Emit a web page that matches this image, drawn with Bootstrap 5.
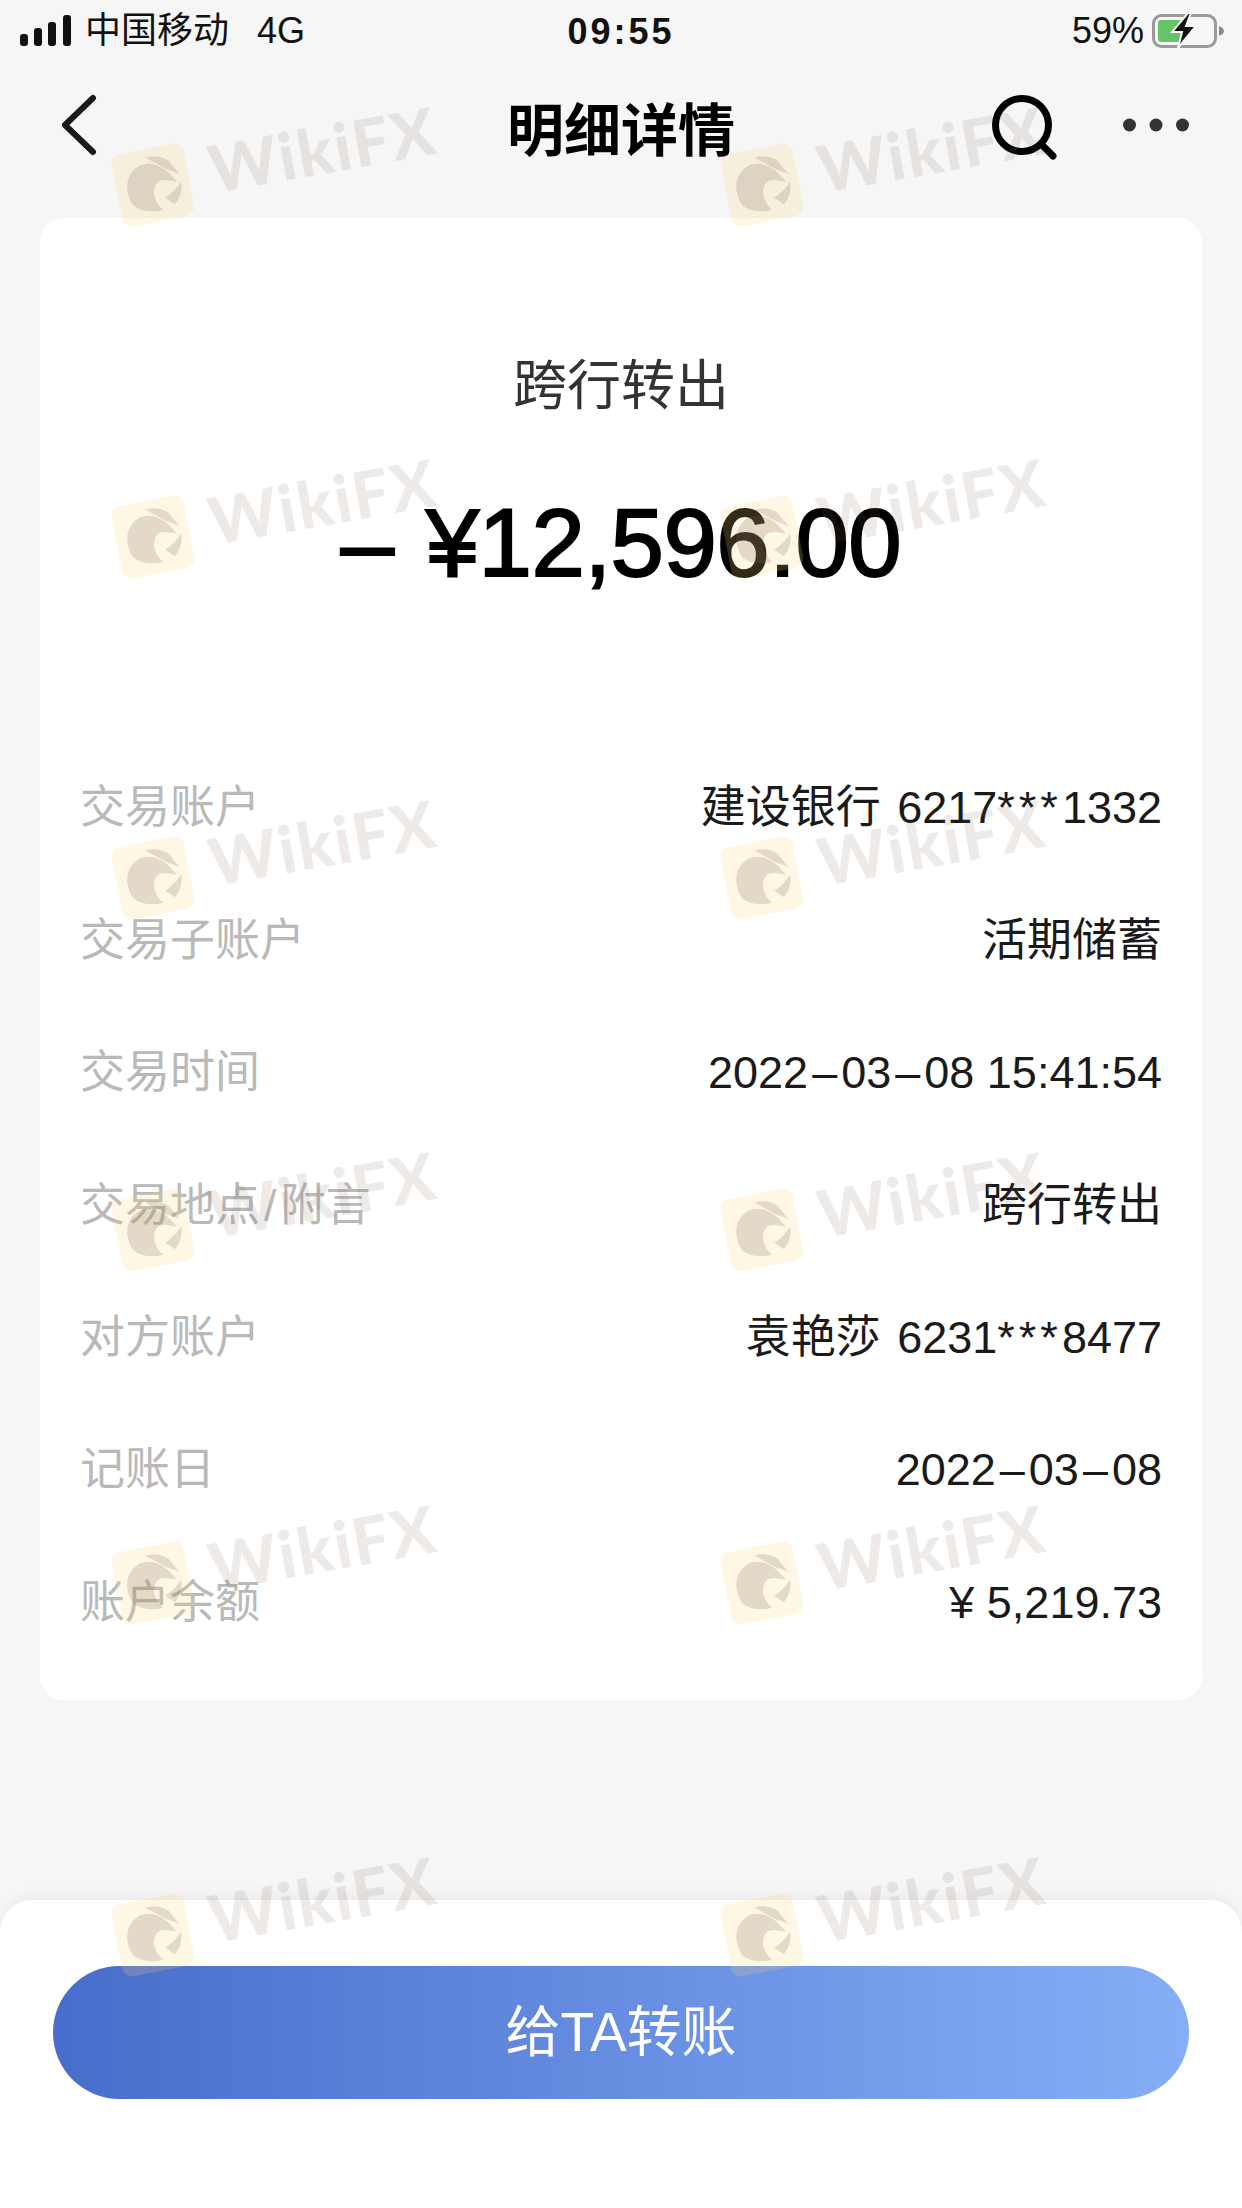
<!DOCTYPE html>
<html lang="zh-CN">
<head>
    <meta charset="UTF-8">
    <title>明细详情</title>
    <link href="https://cdn.jsdelivr.net/npm/bootstrap@5.3.0/dist/css/bootstrap.min.css" rel="stylesheet">
    <style>
        html, body {
            margin: 0;
            height: 2208px;
            overflow: hidden;
        }
        body {
            position: relative;
            width: 1242px;
            background-color: #f6f6f6;
            font-family: "Liberation Sans", "Noto Sans CJK SC", sans-serif;
            color: #111;
        }
        .phone-status {
            height: 62px;
            padding: 0 16px 0 20px;
            font-size: 36px;
            position: relative;
        }
        .phone-carrier {
            margin-left: 14px;
        }
        .phone-net {
            margin-left: 28px;
        }
        .phone-time {
            position: absolute;
            left: 0;
            right: 0;
            top: 5px;
            text-align: center;
            font-weight: 700;
            letter-spacing: 3px;
        }
        .phone-nav {
            height: 156px;
            padding: 0 53px 30px 60px;
            position: relative;
        }
        .phone-title {
            position: absolute;
            left: 0;
            right: 0;
            top: 27px;
            text-align: center;
            font-size: 57px;
            font-weight: 700;
            color: #000;
        }
        .nav-tools {
            gap: 65px;
        }
        .nav-search {
            margin-top: 6px;
        }
        .detail-sheet {
            margin: 0 40px;
            height: 1482px;
            background: #fff;
            border-radius: 24px;
            padding: 136px 40px 0;
        }
        .detail-kind {
            font-size: 54px;
            line-height: 64px;
            color: #333;
            text-align: center;
        }
        .detail-sum {
            margin-top: 69px;
            font-size: 96px;
            line-height: 112px;
            letter-spacing: -0.5px;
            -webkit-text-stroke: 2px #000;
            color: #000;
            text-align: center;
        }
        .detail-minus {
            margin-right: 32px;
        }
        .detail-rows {
            margin-top: 143px;
        }
        .detail-row {
            height: 132.4px;
            font-size: 45px;
        }
        .detail-label {
            color: #b9b9b9;
        }
        .detail-slash {
            margin: 0 4px;
        }
        .detail-value {
            color: #1a1a1a;
        }
        .detail-acct {
            word-spacing: 4px;
        }
        .detail-stars {
            letter-spacing: 4px;
        }
        .detail-dash {
            margin: 0 4px;
        }
        .action-panel {
            position: absolute;
            left: 0;
            right: 0;
            top: 1900px;
            bottom: 0;
            background: #fff;
            border-radius: 32px 32px 0 0;
            box-shadow: 0 -4px 14px rgba(0, 0, 0, 0.05);
            padding: 66px 53px 0 53px;
        }
        .action-btn {
            width: 100%;
            height: 133px;
            border: 0;
            border-radius: 67px;
            background: linear-gradient(90deg, #486dcb, #86aef6);
            color: #fff;
            font-size: 55px;
        }
        .mark-layer {
            position: absolute;
            inset: 0;
            pointer-events: none;
        }
        .mark-item {
            position: absolute;
            width: 340px;
            height: 100px;
        }
        .mark-item svg {
            position: absolute;
            left: 0;
            top: 0;
        }
        .mark-name {
            position: absolute;
            left: 108px;
            top: -18px;
            font-family: Lato, "Liberation Sans", sans-serif;
            font-weight: 900;
            font-size: 65px;
            line-height: 90px;
            letter-spacing: 2px;
            color: rgba(120, 90, 75, 0.13);
            transform: rotate(-10deg);
            transform-origin: left bottom;
            white-space: nowrap;
        }
    </style>
</head>
<body>

<!-- Status bar -->
<div class="phone-status d-flex align-items-center justify-content-between">
    <div class="d-flex align-items-center">
        <svg width="51" height="32" viewBox="0 0 51 32">
            <rect x="0" y="19" width="8" height="12" rx="3" fill="#111"/>
            <rect x="14" y="13" width="8" height="18" rx="3" fill="#111"/>
            <rect x="28" y="7" width="8" height="24" rx="3" fill="#111"/>
            <rect x="43" y="0" width="8" height="31" rx="3" fill="#111"/>
        </svg>
        <span class="phone-carrier">中国移动</span>
        <span class="phone-net">4G</span>
    </div>
    <div class="phone-time">09:55</div>
    <div class="d-flex align-items-center">
        <span>59%</span>
        <svg class="ms-2" width="74" height="36" viewBox="0 0 74 36">
            <rect x="1.5" y="2.5" width="62" height="31" rx="8" fill="none" stroke="#9a9a9a" stroke-width="3"/>
            <rect x="6" y="7" width="24" height="22" rx="3" fill="#65c466"/>
            <path d="M67 13c3 1 5 3 5 5s-2 4-5 5z" fill="#8a8a8a"/>
            <path d="M36 0 L20 19 L30 19 L26 35 L44 13 L34 13 L39 0z" fill="#111" stroke="#f6f6f6" stroke-width="2"/>
        </svg>
    </div>
</div>

<!-- Nav bar -->
<div class="phone-nav d-flex align-items-center justify-content-between">
    <svg width="38" height="62" viewBox="0 0 38 62">
        <path d="M33 4 L5 31 L33 58" fill="none" stroke="#1a1a1a" stroke-width="6" stroke-linecap="round" stroke-linejoin="round"/>
    </svg>
    <div class="phone-title">明细详情</div>
    <div class="nav-tools d-flex align-items-center">
        <svg class="nav-search" width="66" height="66" viewBox="0 0 66 66">
            <circle cx="30" cy="30" r="26.5" fill="none" stroke="#000" stroke-width="7"/>
            <path d="M50 50 L61 61" stroke="#000" stroke-width="7" stroke-linecap="round"/>
        </svg>
        <svg width="66" height="14" viewBox="0 0 66 14">
            <circle cx="6.5" cy="7" r="6.5" fill="#333"/>
            <circle cx="33" cy="7" r="6.5" fill="#333"/>
            <circle cx="59.5" cy="7" r="6.5" fill="#333"/>
        </svg>
    </div>
</div>

<!-- Detail card -->
<div class="detail-sheet">
    <div class="detail-kind">跨行转出</div>
    <div class="detail-sum"><span class="detail-minus">–</span>¥12,596.00</div>
    <div class="detail-rows">
        <div class="detail-row d-flex align-items-center justify-content-between"><span class="detail-label">交易账户</span><span class="detail-value detail-acct">建设银行 6217<span class="detail-stars">***</span>1332</span></div>
        <div class="detail-row d-flex align-items-center justify-content-between"><span class="detail-label">交易子账户</span><span class="detail-value">活期储蓄</span></div>
        <div class="detail-row d-flex align-items-center justify-content-between"><span class="detail-label">交易时间</span><span class="detail-value">2022<span class="detail-dash">–</span>03<span class="detail-dash">–</span>08 15:41:54</span></div>
        <div class="detail-row d-flex align-items-center justify-content-between"><span class="detail-label">交易地点<span class="detail-slash">/</span>附言</span><span class="detail-value">跨行转出</span></div>
        <div class="detail-row d-flex align-items-center justify-content-between"><span class="detail-label">对方账户</span><span class="detail-value detail-acct">袁艳莎 6231<span class="detail-stars">***</span>8477</span></div>
        <div class="detail-row d-flex align-items-center justify-content-between"><span class="detail-label">记账日</span><span class="detail-value">2022<span class="detail-dash">–</span>03<span class="detail-dash">–</span>08</span></div>
        <div class="detail-row d-flex align-items-center justify-content-between"><span class="detail-label">账户余额</span><span class="detail-value">¥ 5,219.73</span></div>
    </div>
</div>

<!-- Bottom action -->
<div class="action-panel">
    <button type="button" class="btn action-btn">给TA转账</button>
</div>

<!-- Watermark layer, filled in below -->
<div class="mark-layer" id="marks"></div>

<script>
    const rows = [141, 493, 834, 1186, 1539, 1891];
    const cols = [109, 718];
    const logo = `<svg width="88" height="88" viewBox="0 0 84 84">
        <g transform="rotate(-11 42 42)">
            <rect x="7" y="7" width="70" height="70" rx="9" fill="rgba(250,215,120,0.2)"/>
            <g fill="rgba(120,100,90,0.2)">
                <path d="M20 58 C14 44 17 28 31 22 C42 18 54 25 60 35 L65 43 L56 40 C50 38 45 40 43 45 C40 51 41 59 47 67 C37 68 27 65 20 58z"/>
                <path d="M40 15 C48 14 56 17 61 22 L69 37 C67 35 62 32 58 30z"/>
                <path d="M69 44 C69 52 65 59 59 64 L51 56 C57 54 64 49 69 44z"/>
            </g>
        </g>
    </svg>`;

    // Same watermark tile at each grid spot
    const layer = document.getElementById("marks");
    rows.forEach(function(top) {
        cols.forEach(function(left) {
            const item = document.createElement("div");
            item.className = "mark-item";
            item.style.left = left + "px";
            item.style.top = top + "px";
            item.innerHTML = logo + '<span class="mark-name">WikiFX</span>';
            layer.appendChild(item);
        });
    });
</script>
<script src="https://cdn.jsdelivr.net/npm/bootstrap@5.3.0/dist/js/bootstrap.bundle.min.js"></script>
</body>
</html>
